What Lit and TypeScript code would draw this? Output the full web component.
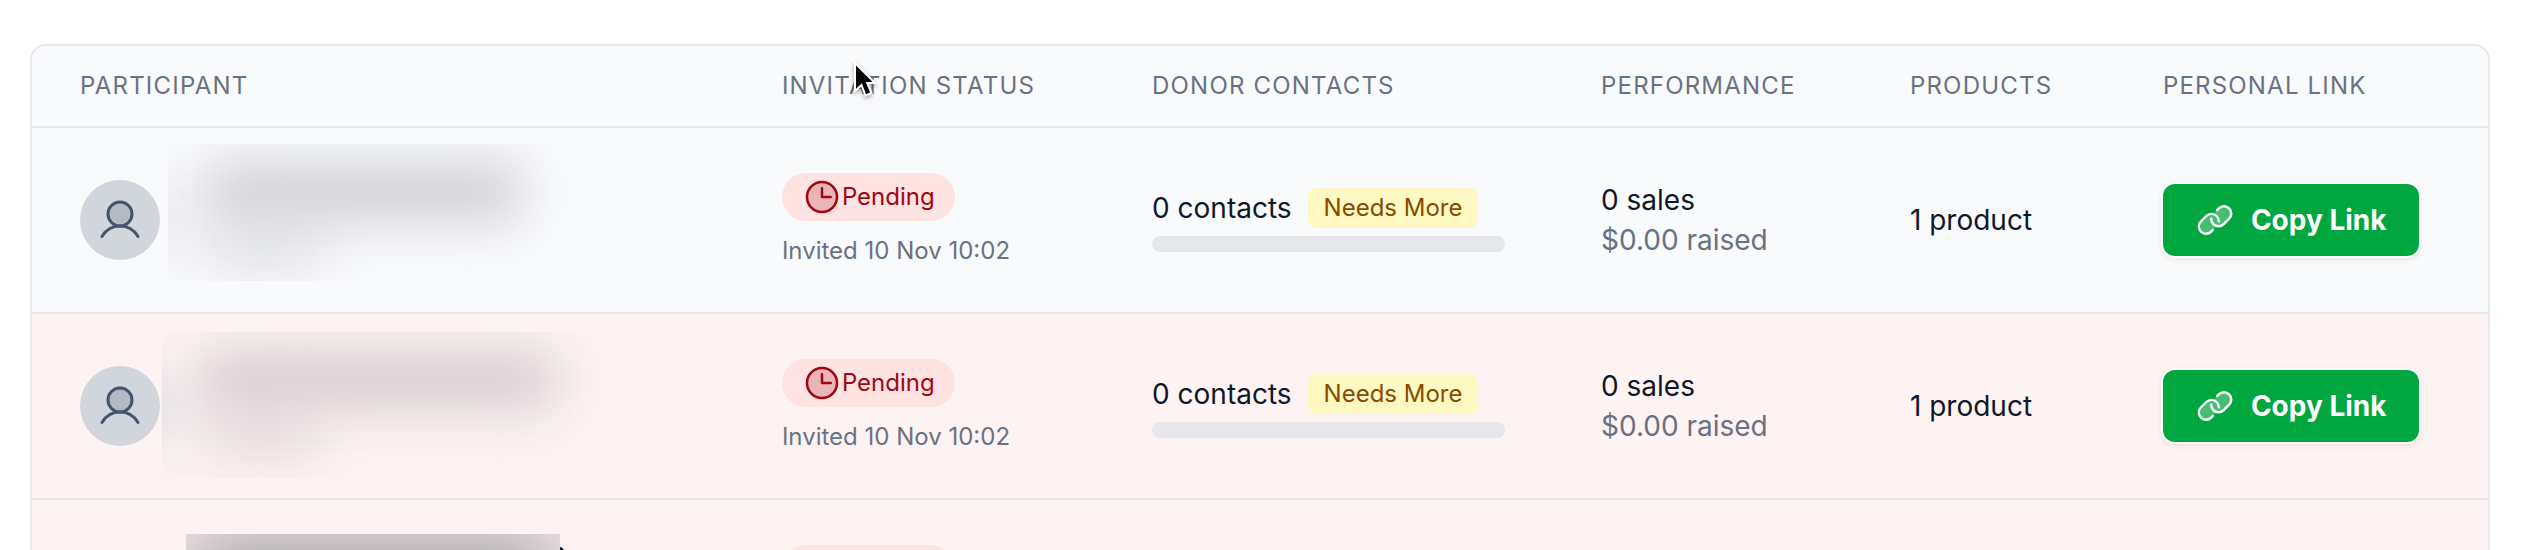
import { LitElement, html, css, svg, nothing } from "lit";
import { customElement, property } from "lit/decorators.js";

interface Participant {
  mask: "short" | "long";
  alert: boolean;
  invited: string;
  contacts: number;
  sales: number;
  raised: string;
  products: string;
}

const participants: Participant[] = [
  { mask: "short", alert: false, invited: "Invited 10 Nov 10:02", contacts: 0, sales: 0, raised: "$0.00", products: "1 product" },
  { mask: "long", alert: true, invited: "Invited 10 Nov 10:02", contacts: 0, sales: 0, raised: "$0.00", products: "1 product" },
];

const glyphs = {
  user: svg`
    <circle cx="128" cy="96" r="64" fill="currentColor" opacity="0.2"/>
    <circle cx="128" cy="96" r="64"/>
    <path d="M32,216c19.37-33.47,54.55-56,96-56s76.63,22.53,96,56"/>`,
  clock: svg`
    <circle cx="128" cy="128" r="96" fill="currentColor" opacity="0.2"/>
    <circle cx="128" cy="128" r="96"/>
    <polyline points="128 72 128 128 184 128"/>`,
  link: svg`
    <path fill="currentColor" stroke="none" opacity="0.27" d="M218.34,119.6,183.6,154.34a46.58,46.58,0,0,1-44.31,12.26c-.31.34-.62.67-.95,1L103.6,202.34A46.63,46.63,0,1,1,37.66,136.4L72.4,101.66A46.6,46.6,0,0,1,116.71,89.4c.31-.34.62-.67,1-1L152.4,53.66a46.63,46.63,0,0,1,65.94,65.94Z"/>
    <path fill="currentColor" stroke="none" d="M240,88.23a54.43,54.43,0,0,1-16,37L189.25,160a54.27,54.27,0,0,1-38.63,16h-.05A54.63,54.63,0,0,1,96,119.84a8,8,0,0,1,16,.45A38.62,38.62,0,0,0,150.58,160h0a38.39,38.39,0,0,0,27.31-11.31l34.75-34.75a38.63,38.63,0,0,0-54.63-54.63l-11,11A8,8,0,0,1,135.7,59l11-11A54.65,54.65,0,0,1,224,48,54.86,54.86,0,0,1,240,88.23ZM109,185.66l-11,11A38.41,38.41,0,0,1,70.6,208h0a38.63,38.63,0,0,1-27.29-65.94L78,107.31A38.63,38.63,0,0,1,144,135.71a8,8,0,0,0,16,.45A54.86,54.86,0,0,0,144,98a54.65,54.65,0,0,0-77.27,0L32,132.75A54.62,54.62,0,0,0,70.56,224h0a54.28,54.28,0,0,0,38.64-16l11-11A8,8,0,0,0,109,185.66Z"/>`,
};

@customElement("duo-icon")
export class DuoIcon extends LitElement {
  static styles = css`
    :host { display: block; width: 40px; height: 40px; flex: none; }
    svg { display: block; width: 100%; height: 100%; }
  `;

  @property() name: keyof typeof glyphs = "user";

  render() {
    return html`<svg viewBox="0 0 256 256" fill="none" stroke="currentColor" stroke-width="16"
      stroke-linecap="round" stroke-linejoin="round" aria-hidden="true">${glyphs[this.name]}</svg>`;
  }
}

/** Blurred patch that hides a participant's name and details. */
@customElement("private-name")
export class PrivateName extends LitElement {
  static styles = css`
    :host { position: absolute; display: block; overflow: hidden; }
    :host([kind="short"]) { left: 136px; top: 16px; width: 410px; height: 137px; --ink: #d3d4d7; --edge: #e6e7ea; }
    :host([kind="long"]) { left: 130px; top: 18px; width: 450px; height: 146px; --ink: #dacfd3; --edge: #dddde2; }
    :host([kind="dense"]) { left: 154px; top: 34px; width: 374px; height: 120px; --ink: #a9a7aa; --edge: #e0d4d7; background: #e6dadd; }
    .smudge { position: absolute; border-radius: 32px; background: var(--ink); filter: blur(24px); }
    .name { left: 32px; right: 52px; top: 16px; height: 64px; }
    .detail { left: 32px; width: 130px; top: 68px; height: 64px; opacity: 0.5; }
    .edge { left: -36px; width: 52px; top: 40px; height: 70px; background: var(--edge); }
    :host([kind="dense"]) .name { left: 16px; right: 16px; top: 8px; }
  `;

  @property({ reflect: true }) kind = "short";

  render() {
    return html`
      <div class="smudge edge"></div>
      <div class="smudge detail"></div>
      <div class="smudge name"></div>
    `;
  }
}

@customElement("app-root")
export class AppRoot extends LitElement {
  static styles = css`
    :host {
      display: block;
      box-sizing: border-box;
      height: 100vh;
      overflow: hidden;
      padding: 44px 36px 0 30px;
      background: #ffffff;
      color: #101828;
      font: 400 28px/40px Inter, "Liberation Sans", sans-serif;
    }
    .card {
      overflow: hidden;
      border: 2px solid #e5e7eb;
      border-radius: 16px;
      background: #f9fafb;
    }
    table { width: 100%; table-layout: fixed; border-collapse: separate; border-spacing: 0; }
    .col-participant { width: 28.58%; }
    .col-status { width: 15.07%; }
    .col-contacts { width: 18.28%; }
    .col-performance { width: 12.58%; }
    .col-products { width: 10.3%; }
    th {
      position: relative;
      padding: 24px 48px;
      border-bottom: 2px solid #e5e7eb;
      background: #f9fafc;
      color: #6a7282;
      font-size: 24px;
      line-height: 32px;
      font-weight: 400;
      letter-spacing: 0.05em;
      text-align: left;
      text-transform: uppercase;
      white-space: nowrap;
    }
    td {
      padding: 32px 48px;
      border-bottom: 2px solid #e5e7eb;
      background: #f9fafc;
      vertical-align: middle;
      white-space: nowrap;
    }
    .alert td { background: #fdf3f2; }
    .participant { position: relative; }
    .person { display: flex; align-items: center; min-height: 120px; }
    .avatar {
      display: grid;
      place-items: center;
      width: 80px;
      height: 80px;
      border-radius: 50%;
      background: #d1d5dc;
      color: #45556c;
    }
    .avatar duo-icon { width: 48px; height: 48px; }
    .status { display: flex; flex-direction: column; align-items: flex-start; gap: 14px; }
    .pill {
      display: flex;
      align-items: center;
      height: 48px;
      padding: 0 20px;
      border-radius: 24px;
      background: #ffe2e2;
      color: #9f0712;
      font-size: 24px;
      line-height: 32px;
    }
    .pending-load { width: 132px; }
    .note { min-height: 32px; color: #6a7282; font-size: 24px; line-height: 32px; }
    .contacts { display: flex; flex-direction: column; gap: 8px; }
    .count { display: flex; align-items: center; gap: 16px; }
    .tag {
      padding: 4px 16px;
      border-radius: 8px;
      background: #fef9c2;
      color: #894b00;
      font-size: 24px;
      line-height: 32px;
    }
    .track { height: 16px; border-radius: 8px; background: #e5e7eb; overflow: hidden; }
    .fill { height: 100%; background: #00a63e; }
    .muted { color: #6a7282; }
    .copy {
      display: inline-flex;
      align-items: center;
      gap: 16px;
      height: 72px;
      margin: 0;
      padding: 0 32px;
      border: 0;
      border-radius: 12px;
      background: #00a63e;
      box-shadow: 0 0 0 2px #ffffff, 0 2px 6px 1px rgba(0, 0, 0, 0.1);
      color: #ffffff;
      font: inherit;
      font-weight: 700;
      vertical-align: middle;
      cursor: pointer;
    }
    .pointer { position: absolute; left: 116px; top: 12px; width: 28px; height: 44px; overflow: visible; filter: drop-shadow(0 2px 2px rgba(0, 0, 0, 0.35)); }
    .stroke-end { position: absolute; left: 528px; top: 46px; width: 8px; height: 16px; }
  `;

  private row(p: Participant) {
    return html`
      <tr class=${p.alert ? "alert" : nothing}>
        <td class="participant">
          <div class="person">
            <div class="avatar"><duo-icon name="user"></duo-icon></div>
            <private-name kind=${p.mask}></private-name>
          </div>
        </td>
        <td>
          <div class="status">
            <div class="pill"><duo-icon name="clock"></duo-icon>Pending</div>
            <div class="note">${p.invited}</div>
          </div>
        </td>
        <td>
          <div class="contacts">
            <div class="count"><span>${p.contacts} contacts</span><span class="tag">Needs More</span></div>
            <div class="track"><div class="fill" style="width:${p.contacts}%"></div></div>
          </div>
        </td>
        <td>
          <div>${p.sales} sales</div>
          <div class="muted">${p.raised} raised</div>
        </td>
        <td>${p.products}</td>
        <td><button class="copy" type="button"><duo-icon name="link"></duo-icon>Copy Link</button></td>
      </tr>
    `;
  }

  /** Row at the fold whose details are not filled in yet. */
  private partialRow() {
    return html`
      <tr class="alert">
        <td class="participant">
          <div class="person">
            <div class="avatar"><duo-icon name="user"></duo-icon></div>
            <private-name kind="dense"></private-name>
            <svg class="stroke-end" viewBox="0 0 8 16" aria-hidden="true">
              <path d="M0 2Q4 4 5 14" fill="none" stroke="#101828" stroke-width="3"/>
            </svg>
          </div>
        </td>
        <td>
          <div class="status">
            <div class="pill"><div class="pending-load"></div></div>
            <div class="note"></div>
          </div>
        </td>
        <td></td>
        <td></td>
        <td></td>
        <td></td>
      </tr>
    `;
  }

  render() {
    return html`
      <div class="card">
        <table>
          <colgroup>
            <col class="col-participant" />
            <col class="col-status" />
            <col class="col-contacts" />
            <col class="col-performance" />
            <col class="col-products" />
            <col />
          </colgroup>
          <thead>
            <tr>
              <th scope="col">Participant</th>
              <th scope="col">
                Invitation Status
                <svg class="pointer" viewBox="0 0 28 44" aria-hidden="true">
                  <path d="M5 5V33L11.500 27L15.500 37.500L21.500 35L17.200 25H25Z"
                    fill="#000" stroke="#fff" stroke-width="2"/>
                </svg>
              </th>
              <th scope="col">Donor Contacts</th>
              <th scope="col">Performance</th>
              <th scope="col">Products</th>
              <th scope="col">Personal Link</th>
            </tr>
          </thead>
          <tbody>
            ${participants.map((p) => this.row(p))}
            ${this.partialRow()}
          </tbody>
        </table>
      </div>
    `;
  }
}
